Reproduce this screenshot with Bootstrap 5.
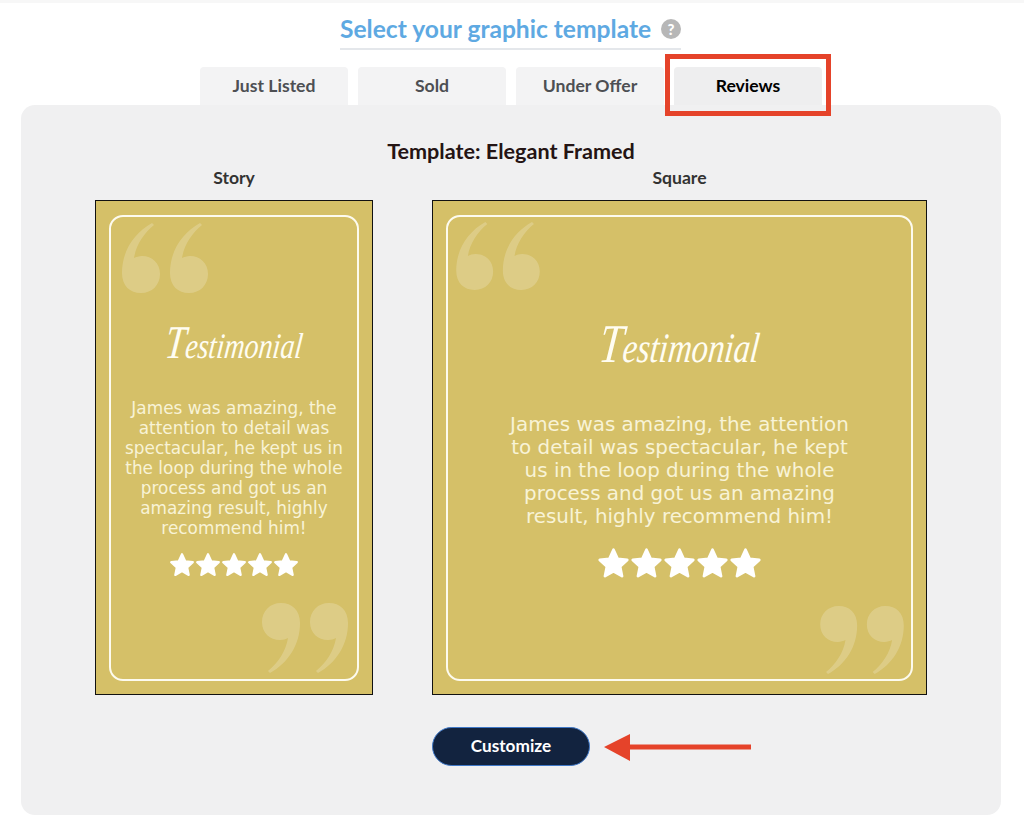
<!DOCTYPE html>
<html lang="en"><head><meta charset="utf-8"><title>Select your graphic template</title>
<link href="https://cdn.jsdelivr.net/npm/bootstrap@5.3.0/dist/css/bootstrap.min.css" rel="stylesheet">
<style>
html,body{height:835px;overflow:hidden}
body{background:#fff;font-family:"Lato","Liberation Sans",sans-serif;position:relative;border-top:3px solid #f7f7f7}
.pick-head{width:341px;height:47px;margin-left:340px;padding-top:8px;border-bottom:2px solid #e4e7eb;color:#5ea9e2;font-size:24.6px;line-height:36px;font-weight:700}
.help-dot{width:20px;height:20px;background:#b7b7b7;color:#fff;font-size:15px;line-height:20px;font-weight:900}
.tab-row{margin-top:17px;gap:10px;width:1022px}
.tab-row .nav-link{width:148px;height:38px;padding:0;line-height:38px;text-align:center;background:#f3f3f4;color:#4d4f53;font-weight:700;font-size:17.6px;border-radius:4px 4px 0 0}
.tab-row .nav-link.active{color:#000;background:#eeeeef}
.panel-box{width:980px;height:710px;margin-left:21px;background:#f0f0f1;border-radius:14px;padding:34px 74px 0}
.panel-title{font-size:21.6px;line-height:24px;font-weight:700;color:#241414;text-align:center}
.frames{gap:59px;margin-top:4px}
.col-story{width:278px}
.col-square{width:495px}
.size-label{font-size:17.6px;line-height:22px;font-weight:700;color:#333;text-align:center;margin-bottom:11px}
.gold-frame{height:495px;background:#d5c068;border:1px solid #111;padding:14px 13px 13px}
.inner-line{height:100%;border:2px solid #fdfbef;border-radius:14px;position:relative;color:#f8f3d6;text-align:center;font-family:"DejaVu Sans","Lato",sans-serif;font-weight:400}
.script-word{font-family:"Liberation Serif",serif;font-style:italic;color:#fffdf2;line-height:54px;height:60px;transform:scaleX(.78) skewX(-8deg)}
.script-word::first-letter{font-size:1.3em}
.col-story .inner-line{padding-top:98px}
.col-square .inner-line{padding-top:100px}
.col-story .script-word{font-size:36px;margin-bottom:23px}
.col-square .script-word{font-size:42px;margin-bottom:36px}
.col-story .quote-text{font-size:16.9px;line-height:20px}
.col-square .quote-text{font-size:19.9px;line-height:23px}
.col-story .star-row{margin-top:14px}
.col-square .star-row{margin-top:19px}
.col-story .star-row svg{width:26px;height:26px}
.col-square .star-row svg{width:33px;height:33px}
.q-mark{position:absolute;fill:#fff;opacity:.2}
.col-story .q-open{left:11px;top:6px;width:86px;height:70px}
.col-story .q-close{right:9px;bottom:6px;width:86px;height:70px}
.col-square .q-open{left:8px;top:5px;width:84px;height:68px}
.col-square .q-close{right:7px;bottom:5px;width:84px;height:68px}
.go-btn{width:158px;height:39px;margin-top:32px;padding:0 0 2px;background:#12233f;color:#fff;border:1px solid #3f78c8;font-weight:700;font-size:17.2px;line-height:35px}
.go-btn:hover{background:#12233f;color:#fff}
.mark-box{position:absolute;left:665px;top:51px;width:166px;height:62px;border:5px solid #e5432a}
.mark-arrow{position:absolute;left:604px;top:731px;width:148px;height:30px}
</style></head><body>
<svg width="0" height="0" class="d-none" aria-hidden="true"><defs>
<path id="quote66" d="M30 0C12 10 0 28 0 50 0 63 8 70 19 70 30 70 38 62 38 51 38 40 30 33 20 33 17 33 14 34 12 35 14 22 22 10 32 2ZM78 0C60 10 48 28 48 50 48 63 56 70 67 70 78 70 86 62 86 51 86 40 78 33 68 33 65 33 62 34 60 35 62 22 70 10 80 2Z"/>
<path id="star5" fill="#fff" stroke="#fff" stroke-width="2" stroke-linejoin="round" d="M12 2l3 6.600 7 .8-5.200 4.800 1.400 7L12 17.700 5.800 21.200l1.400-7L2 9.400l7-.8z"/>
</defs></svg>
<div class="pick-head d-flex justify-content-between align-items-start"><span>Select your graphic template</span><span class="help-dot rounded-circle text-center mt-2">?</span></div>
<ul class="nav tab-row justify-content-center">
<li class="nav-item"><a class="nav-link" href="#">Just Listed</a></li>
<li class="nav-item"><a class="nav-link" href="#">Sold</a></li>
<li class="nav-item"><a class="nav-link" href="#">Under Offer</a></li>
<li class="nav-item"><a class="nav-link active" href="#">Reviews</a></li>
</ul>
<div class="panel-box">
<div class="panel-title">Template: Elegant Framed</div>
<div class="frames d-flex">
<div class="col-story">
<div class="size-label">Story</div>
<div class="gold-frame"><div class="inner-line">
<svg class="q-mark q-open" viewBox="0 0 86 70"><use href="#quote66"/></svg>
<div class="script-word">Testimonial</div>
<div class="quote-text">James was amazing, the<br>attention to detail was<br>spectacular, he kept us in<br>the loop during the whole<br>process and got us an<br>amazing result, highly<br>recommend him!</div>
<div class="star-row d-flex justify-content-center">
<svg viewBox="0 0 24 24"><use href="#star5"/></svg><svg viewBox="0 0 24 24"><use href="#star5"/></svg><svg viewBox="0 0 24 24"><use href="#star5"/></svg><svg viewBox="0 0 24 24"><use href="#star5"/></svg><svg viewBox="0 0 24 24"><use href="#star5"/></svg>
</div>
<svg class="q-mark q-close" viewBox="0 0 86 70"><g transform="rotate(180 43 35)"><use href="#quote66"/></g></svg>
</div></div>
</div>
<div class="col-square">
<div class="size-label">Square</div>
<div class="gold-frame"><div class="inner-line">
<svg class="q-mark q-open" viewBox="0 0 86 70"><use href="#quote66"/></svg>
<div class="script-word">Testimonial</div>
<div class="quote-text">James was amazing, the attention<br>to detail was spectacular, he kept<br>us in the loop during the whole<br>process and got us an amazing<br>result, highly recommend him!</div>
<div class="star-row d-flex justify-content-center">
<svg viewBox="0 0 24 24"><use href="#star5"/></svg><svg viewBox="0 0 24 24"><use href="#star5"/></svg><svg viewBox="0 0 24 24"><use href="#star5"/></svg><svg viewBox="0 0 24 24"><use href="#star5"/></svg><svg viewBox="0 0 24 24"><use href="#star5"/></svg>
</div>
<svg class="q-mark q-close" viewBox="0 0 86 70"><g transform="rotate(180 43 35)"><use href="#quote66"/></g></svg>
</div></div>
</div>
</div>
<div class="text-center"><button class="btn go-btn rounded-pill" type="button">Customize</button></div>
</div>
<div class="mark-box"></div>
<svg class="mark-arrow" viewBox="0 0 148 30"><path fill="#e5432a" d="M0 13L26 0v10.500H147v5H26V27z"/></svg>
</body></html>
